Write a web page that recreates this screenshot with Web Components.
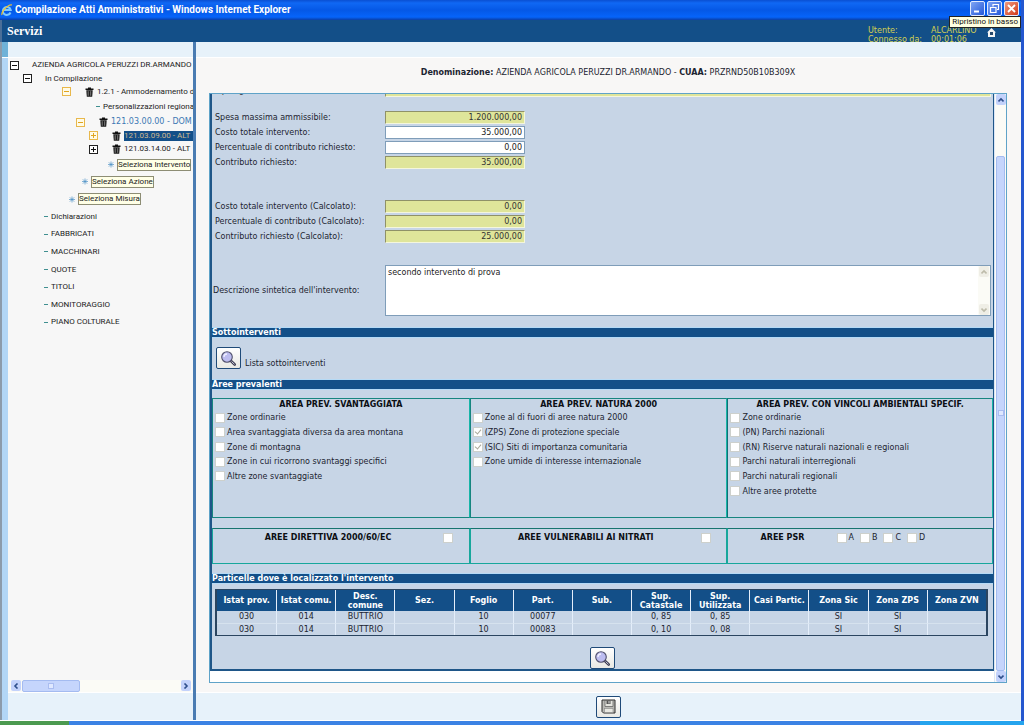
<!DOCTYPE html>
<html lang="it">
<head>
<meta charset="utf-8">
<title>Compilazione Atti Amministrativi</title>
<style>
html, body { margin: 0; height: 100%; }
body { font: 8px/12px "DejaVu Sans", Verdana, sans-serif; color: #1c2430; overflow: hidden; }
</style>
</head>
<body>
<app-window>
  <title-bar slot="title">Compilazione Atti Amministrativi - Windows Internet Explorer</title-bar>
  <service-header slot="header"></service-header>
  <nav-tree slot="nav"></nav-tree>
  <intervention-page slot="main"></intervention-page>
</app-window>

<script>
const define = (name, html, setup) => {
  const t = document.createElement('template');
  t.innerHTML = '<style>*{box-sizing:border-box}</style>' + html;
  customElements.define(name, class extends HTMLElement {
    constructor() {
      super();
      this.attachShadow({ mode: 'open' }).append(t.content.cloneNode(true));
    }
    connectedCallback() {
      if (setup && !this.ready) { this.ready = true; setup(this, this.shadowRoot); }
    }
  });
};

/* Icons */
const ICONS = {
  lens: '<svg viewBox="0 0 17 17" width="17" height="17"><path d="M10.5 10.5l4.2 4" stroke="#3c3c50" stroke-width="2.600" stroke-linecap="round"/><path d="M11.5 11.5l3 2.800" stroke="#c9c9dc" stroke-width="1"/><circle cx="7" cy="7" r="5.300" fill="#bdbdf0" stroke="#50506c" stroke-width="1.100"/><path d="M4 7a3 3 0 0 1 3-3" stroke="#f0f0ff" stroke-width="1.300" fill="none"/></svg>',
  disk: '<svg viewBox="0 0 15 15" width="15" height="15"><path d="M1 1h13v13H2.500L1 12.500z" fill="#b9b9b5" stroke="#2e2e2e"/><path d="M4 1.500h8v6H4z" fill="#e4e4de" stroke="#666" stroke-width=".8"/><path d="M5.500 1.500h4V5h-4z" fill="#555"/><path d="M7.500 2h1v2.500h-1z" fill="#ddd"/><rect x="3.500" y="9.500" width="8.500" height="4" fill="#e8e8e2" stroke="#888" stroke-width=".6"/></svg>',
  trash: '<svg viewBox="0 0 9 10" width="9" height="10"><path d="M.500 1.500h2.500V.500h3v1h2.500v1.500h-8z" fill="#111"/><path d="M1.300 3.200h6.400l-.5 6.500H1.800z" fill="#1b1b1b"/><path d="M3.200 4.200v4.600M5.700 4.200v4.600" stroke="#999" stroke-width=".8"/></svg>',
  star: '<svg viewBox="0 0 7 7" width="6" height="7"><path d="M3.500 0v7M0 3.500h7M1 1l5 5M6 1L1 6" stroke="#4b8fc4" stroke-width=".8"/></svg>',
  dash: '<svg viewBox="0 0 4 7" width="4" height="7"><path d="M0 3.500h4" stroke="#3f8f90" stroke-width="1"/></svg>'
};
define('ui-icon', '<style>:host{display:inline-flex;flex:none}</style>', (h, r) => {
  r.innerHTML += ICONS[h.getAttribute('name')];
});

define('icon-button', `<style>
:host{display:inline-block}
button{display:flex;align-items:center;justify-content:center;width:25px;height:22px;padding:0;border:1px solid #1f4a78;border-radius:2px;background:linear-gradient(#fff,#e9e9e4)}
</style><button type="button"><slot></slot></button>`, (h, r) => {
  r.querySelector('button').setAttribute('aria-label', h.getAttribute('label'));
});

/* Title bar with the window buttons */
define('title-bar', `<style>
:host{display:flex;align-items:center;height:20px;padding:0 2px 0 1px;background:linear-gradient(#0a4fd2,#1068f4 15%,#0558e6 50%,#0664fa 85%,#0a3fa8);color:#fff;font:bold 10px/18px "Roboto","Liberation Sans",sans-serif}
.t{flex:1;margin-left:2px;white-space:nowrap}
.b{display:flex;gap:2px;margin-bottom:3px}
button{display:flex;padding:0;width:15px;height:15px;border:1px solid #dfe9ff;border-radius:2px;background:linear-gradient(135deg,#7ea4f4,#2458d8)}
button.x{background:linear-gradient(135deg,#f09a80,#d03a18)}
</style>
<svg width="12" height="14" viewBox="0 0 12 14"><path d="M9.500 9.500A4 4 0 1 1 9.700 7H3" fill="none" stroke="#7cc8ff" stroke-width="2"/><path d="M1 12C0 9 7 1 11 2" fill="none" stroke="#e9c13a" stroke-width="1.200"/></svg>
<span class="t"><slot></slot></span>
<span class="b">
<button type="button" aria-label="Riduci a icona"><svg viewBox="0 0 13 13"><path d="M3 9.500h5" stroke="#fff" stroke-width="2"/></svg></button>
<button type="button" aria-label="Ripristina"><svg viewBox="0 0 13 13"><path d="M5 4.500V2.500h5.500v5H9M5 2.500h5.500M2.500 5.500h5.500v5H2.500z" fill="none" stroke="#fff" stroke-width="1.200"/></svg></button>
<button type="button" class="x" aria-label="Chiudi"><svg viewBox="0 0 13 13"><path d="M3 3l7 7M10 3l-7 7" stroke="#fff" stroke-width="1.800"/></svg></button>
</span>`);

define('service-header', `<style>
:host{display:flex;position:relative;height:22px;padding:0 25px 0 5px;align-items:center;background:#134f88;color:#fff}
h1{flex:1;margin:0;font:bold 12px/22px "Liberation Serif",serif}
dl{display:grid;grid-template-columns:63px 48px;margin:8px 0 0;color:#d4cf52;line-height:9px}
dd{margin:0}
a{display:flex;margin:2px 0 0 8px}
.tip{position:absolute;right:0;top:-4px;height:12px;padding:0 2px;border:1px solid #222;background:#ffffe1;color:#111;font:8px/10px Roboto,sans-serif;white-space:nowrap}
</style>
<h1>Servizi</h1>
<dl><dt>Utente:</dt><dd>ALCARLINO</dd><dt>Connesso da:</dt><dd>00:01:06</dd></dl>
<a href="#" aria-label="Home"><svg width="9" height="9" viewBox="0 0 9 9"><path d="M0 4.500L4.500 0 9 4.500H8V9H1V4.500z" fill="#f4f4f4"/><path d="M3 4h3v3H3z" fill="#27486a"/></svg></a>
<span class="tip" role="tooltip">Ripristino in basso</span>`);

/* Scroll bar drawn in the XP style; thumb start and size are percentages of the track */
define('scroll-bar', `<style>
:host{display:flex;flex:none;background:#fbfbf6;--c:#c3d2fb;--k:#2f4f8c}
:host([muted]){--c:#efeee6;--k:#bdbbaa}
:host([vertical]){flex-direction:column;width:12px}
:host(:not([vertical])){height:12px}
.a{flex:none;width:10px;height:11px;border-radius:2px;background:var(--c);display:flex;align-items:center;justify-content:center;margin:0 1px}
svg{width:6px;height:6px;fill:none;stroke:var(--k);stroke-width:1.600}
.track{flex:1;display:flex;min-width:0;min-height:0}
:host([vertical]) .track{flex-direction:column;margin:0 1px}
.before{flex:0 0 var(--start)}
.thumb{flex:0 0 var(--size);border:1px solid #a4bbf0;border-radius:2px;background:#c5d5fc;display:flex;align-items:center;justify-content:center}
.thumb::after{content:"";width:4px;height:4px;background:#dfe8ff;border:1px solid #aabdf0}
:host([muted]) .thumb{display:none}
</style>
<span class="a"><svg viewBox="0 0 6 6"><path class="p"/></svg></span>
<span class="track"><span class="before"></span><span class="thumb"></span></span>
<span class="a"><svg viewBox="0 0 6 6"><path class="n"/></svg></span>`, (h, r) => {
  const v = h.hasAttribute('vertical');
  r.querySelector('.p').setAttribute('d', v ? 'M.500 4.500L3 2l2.500 2.500' : 'M4.500.500L2 3l2.500 2.500');
  r.querySelector('.n').setAttribute('d', v ? 'M.500 1.500L3 4l2.500-2.500' : 'M1.500.500L4 3L1.500 5.500');
});

/* Window frame */
define('app-window', `<style>
:host{display:grid;grid-template-rows:auto auto minmax(0,1fr) 1px 4px;height:100vh;border-right:3px solid #2457cf;background:#fff}
.body{display:grid;grid-template-columns:8px 185px 3px minmax(0,1fr);min-height:0}
.edge{border-left:2px solid #8c9bab;background:linear-gradient(#6fb2d8 15px,#fff 15px,#fff 16px,#b2d6f6 16px)}
.bar{background:#4a7cb2}
slot{min-height:0}
.shell{border:solid #4a6f98;border-width:0 0 0 2px}
.task{margin-right:-3px;background:linear-gradient(90deg,#4c9a50 69px,#3b82e4 69px,#3b82e4 920px,#25a4ee 920px)}
</style>
<slot name="title"></slot>
<div class="shell"><slot name="header"></slot></div>
<div class="body"><span class="edge"></span><slot name="nav"></slot><span class="bar"></span><slot name="main"></slot></div>
<span></span><span class="task"></span>`);

/* One line of the navigation tree */
define('tree-row', `<style>
:host{display:flex;align-items:center;height:14px;padding-left:var(--indent);white-space:nowrap;font:8px/12px Roboto,"Liberation Sans",sans-serif}
:host([size=s]){height:13px}
:host([size=l]){height:17px}
:host([size=auto]){height:auto}
:host([wide]){font-family:"DejaVu Sans",sans-serif}
button{position:relative;flex:none;width:9px;height:9px;margin-right:13px;padding:0;border:1px solid #222;background:#fff;color:#111}
button.o,button.plus{margin-right:14px}
button.o{color:#e0a520;border-color:#e8b84c;background:#fffbe8}
button::before,button.plus::after{content:"";position:absolute;left:1px;right:1px;top:3px;height:1px;background:currentColor}
button.plus::after{left:3px;right:3px;top:1px;height:5px}
ui-icon{margin-right:3px}
a{color:#222;text-decoration:none}
:host([blue]) a{color:#3c78b4}
:host([selected]) a{flex:1;background:#134f88;color:#d0b98e;line-height:10px}
:host([boxed]) a{border:1px solid #8d8d74;background:#ffffe6;line-height:10px}
</style><a href="#"><slot></slot></a>`, (h, r) => {
  const a = r.querySelector('a');
  h.style.setProperty('--indent', h.getAttribute('indent') + 'px');
  const tg = h.getAttribute('toggle');
  if (tg) {
    const b = document.createElement('button');
    b.type = 'button'; b.className = tg;
    b.setAttribute('aria-label', tg.includes('plus') ? 'Espandi' : 'Comprimi');
    a.before(b);
  }
  const ic = h.getAttribute('icon');
  if (ic) { const i = document.createElement('ui-icon'); i.setAttribute('name', ic); a.before(i); }
});

define('nav-tree', `<style>
:host{display:flex;flex-direction:column;min-height:0;background:#e7f2fa}
nav{flex:1;display:flex;flex-direction:column;min-height:0;margin-top:15px;border:solid #fff;border-width:1px 0;background:#f7f7f7;overflow:hidden}
.leaves{display:grid;grid-auto-rows:1fr;height:158px}
scroll-bar{margin:auto 1px 0 2px;--start:0%;--size:37%}
footer{height:27px}
</style>
<nav aria-label="Servizi">
<tree-row indent="2" toggle="minus">AZIENDA AGRICOLA PERUZZI DR.ARMANDO</tree-row>
<tree-row indent="15" size="s" toggle="minus">In Compilazione</tree-row>
<tree-row indent="54" size="s" toggle="minus o" icon="trash">1.2.1 - Ammodernamento d</tree-row>
<tree-row indent="88" size="l" icon="dash">Personalizzazioni regiona</tree-row>
<tree-row indent="68" toggle="minus o" icon="trash" wide blue>121.03.00.00 - DOM</tree-row>
<tree-row indent="81" size="s" toggle="plus o" icon="trash" selected>121.03.09.00 - ALT</tree-row>
<tree-row indent="81" toggle="plus" icon="trash">121.03.14.00 - ALT</tree-row>
<tree-row indent="100" size="l" icon="star" boxed>Seleziona Intervento</tree-row>
<div class="leaves">
<tree-row indent="74" size="auto" icon="star" boxed>Seleziona Azione</tree-row>
<tree-row indent="61" size="auto" icon="star" boxed>Seleziona Misura</tree-row>
<tree-row indent="36" size="auto" icon="dash">Dichiarazioni</tree-row>
<tree-row indent="36" size="auto" icon="dash">FABBRICATI</tree-row>
<tree-row indent="36" size="auto" icon="dash">MACCHINARI</tree-row>
<tree-row indent="36" size="auto" icon="dash">QUOTE</tree-row>
<tree-row indent="36" size="auto" icon="dash">TITOLI</tree-row>
<tree-row indent="36" size="auto" icon="dash">MONITORAGGIO</tree-row>
<tree-row indent="36" size="auto" icon="dash">PIANO COLTURALE</tree-row>
</div>
<scroll-bar></scroll-bar>
</nav>
<footer></footer>`);

/* Form pieces */
define('form-field', `<style>
:host{display:grid;grid-template-columns:170px 140px;align-items:center;height:15px;padding-left:3px}
:host([full]){grid-template-columns:170px minmax(0,1fr);padding-right:2px}
input{width:100%;height:13px;margin:0;padding:0 2px;border:1px solid #7f9db9;border-radius:0;background:#fff;color:#222;font:inherit;text-align:right;outline:0}
input:read-only{background:#dfe59a;border-color:#8f9168 #f4f6dc #f4f6dc #8f9168;color:#333}
:host([full]) input{text-align:left}
</style><label for="f"></label><input id="f">`, (h, r) => {
  r.querySelector('label').textContent = h.getAttribute('label');
  const i = r.querySelector('input');
  i.value = h.getAttribute('value');
  i.readOnly = h.hasAttribute('readonly');
});

define('text-block', `<style>
:host{display:grid;grid-template-columns:172px minmax(0,1fr) 13px;align-items:center;padding:0 2px 0 1px}
textarea{display:block;width:100%;height:51px;margin:0;padding:1px 2px;border:1px solid #7f9db9;border-right:0;border-radius:0;resize:none;overflow:hidden;background:#fff;color:#222;font:inherit;outline:0}
scroll-bar{height:51px;border:1px solid #7f9db9;border-left:0;width:13px}
</style><label for="t">Descrizione sintetica dell'intervento:</label><textarea id="t">secondo intervento di prova</textarea><scroll-bar vertical muted></scroll-bar>`);

define('section-bar', `<style>
:host{display:block}
h2{margin:0;border:solid #b5daf6;border-width:1px 0;background:#134f88;color:#fff;font:bold 8px/9px "DejaVu Sans",sans-serif}
</style><h2><slot></slot></h2>`);

define('check-item', `<style>
:host{display:block}
label{display:flex;align-items:center;gap:2px;height:100%}
input{appearance:none;position:relative;flex:none;width:10px;height:10px;margin:0 0 1px;border:1px solid #cdd0cc;background:#fff}
input:checked::before{content:"";position:absolute;left:2px;top:0;width:3px;height:5px;border:solid #aaa89a;border-width:0 1px 1px 0;transform:rotate(40deg)}
</style><label><input type="checkbox" disabled><slot></slot></label>`, (h, r) => {
  const i = r.querySelector('input');
  i.checked = h.hasAttribute('checked');
  if (h.getAttribute('label')) i.setAttribute('aria-label', h.getAttribute('label'));
});

define('area-box', `<style>
:host{display:block;min-width:0;border:1px solid #17857f;border-right-color:#17b5a8}
:host([last]){border-left-color:#0f6f74}
h3{margin:0;color:#0c0f14;font:bold 8px/12px "DejaVu Sans",sans-serif;text-align:center}
.list{display:grid;grid-template-rows:repeat(6,1fr);height:88px;padding-left:2px}
</style><h3></h3><div class="list"><slot></slot></div>`, (h, r) => {
  r.querySelector('h3').textContent = h.getAttribute('heading');
});

define('flag-box', `<style>
:host{display:grid;grid-template-columns:90% 1fr;align-items:center;align-content:start;padding-top:3px;border:1px solid #17a79c;border-top-color:#17756f}
:host([many]){grid-template-columns:41% 1fr}
h3{margin:0;color:#0c0f14;font:bold 8px/12px "DejaVu Sans",sans-serif;text-align:center}
.f{display:flex;gap:6px;height:12px}
</style><h3></h3><div class="f"><slot></slot></div>`, (h, r) => {
  r.querySelector('h3').textContent = h.getAttribute('heading');
});

define('parcel-table', `<style>
:host{display:block}
table{width:100%;table-layout:fixed;border-collapse:separate;border-spacing:0;border:solid #2b4560;border-width:1px 2px}
th{height:21px;padding:0;background:#134f88;color:#fff;font:bold 8px/9px "DejaVu Sans",sans-serif}
td{height:12px;padding:0;text-align:center;line-height:10px}
th+th,td+td{border-left:1px solid #e4eefa}
tbody tr+tr td{border-top:1px solid #d6e2ee}
</style><table><thead><tr></tr></thead><tbody></tbody></table>`, (h, r) => {
  const heads = ['Istat prov.', 'Istat comu.', 'Desc. comune', 'Sez.', 'Foglio', 'Part.', 'Sub.', 'Sup. Catastale', 'Sup. Utilizzata', 'Casi Partic.', 'Zona Sic', 'Zona ZPS', 'Zona ZVN'];
  const rows = [
    ['030', '014', 'BUTTRIO', '', '10', '00077', '', '0, 85', '0, 85', '', 'SI', 'SI', ''],
    ['030', '014', 'BUTTRIO', '', '10', '00083', '', '0, 10', '0, 08', '', 'SI', 'SI', '']
  ];
  r.querySelector('thead tr').innerHTML = heads.map(t => '<th scope="col">' + t + '</th>').join('');
  r.querySelector('tbody').innerHTML = rows.map(c => '<tr>' + c.map(t => '<td>' + t + '</td>').join('') + '</tr>').join('');
});

define('intervention-page', `<style>
:host{display:flex;flex-direction:column;min-height:0;background:#e7f2fa}
main{flex:1;display:flex;flex-direction:column;min-height:0;margin-top:15px;padding:0 14px 9px 13px;border:solid #fff;border-width:1px 0;background:#f8f7f6}
.who{margin:0;height:35px;padding-top:9px;text-align:center}
.frame{flex:1;display:flex;min-height:0;border:1px solid #5fa3c8;background:#fff}
/* the form is scrolled to its end, so it hangs from the bottom edge */
.view{flex:1;display:flex;flex-direction:column;justify-content:flex-end;min-width:0;overflow:hidden;padding-bottom:11px}
form{flex:none;border:solid #1f5688;border-width:0 1px 2px 2px;background:#c7d5e6}
.g1{padding-top:12px}.g2{padding:29px 0 21px}
text-block{margin-bottom:11px}
.sub{display:flex;align-items:flex-end;gap:4px;height:41px;padding:0 4px 10px}
.sub span{line-height:11px}
.areas,.flags{display:grid;grid-template-columns:33fr 33fr 34fr}
.areas{height:120px;margin:8px 0 10px}
.flags{height:36px;margin-bottom:9px}
parcel-table{margin:5px 5px 11px 3px}
.look{display:flex;justify-content:center}
scroll-bar{--start:9%;--size:91%;border-left:1px solid #dbe6f6;}
footer{display:flex;justify-content:center;align-items:center;height:27px}
</style>
<main>
<p class="who"><b>Denominazione:</b> AZIENDA AGRICOLA PERUZZI DR.ARMANDO - <b>CUAA:</b> PRZRND50B10B309X</p>
<div class="frame">
<div class="view"><form>
<form-field full readonly label="Tipologia Q.S.N. :" value="AMMODERNAMENTO DOTAZIONI AZIENDALI"></form-field>
<div class="g1">
<form-field readonly label="Spesa massima ammissibile:" value="1.200.000,00"></form-field>
<form-field label="Costo totale intervento:" value="35.000,00"></form-field>
<form-field label="Percentuale di contributo richiesto:" value="0,00"></form-field>
<form-field readonly label="Contributo richiesto:" value="35.000,00"></form-field>
</div>
<div class="g2">
<form-field readonly label="Costo totale intervento (Calcolato):" value="0,00"></form-field>
<form-field readonly label="Percentuale di contributo (Calcolato):" value="0,00"></form-field>
<form-field readonly label="Contributo richiesto (Calcolato):" value="25.000,00"></form-field>
</div>
<text-block></text-block>
<section-bar>Sottointerventi</section-bar>
<div class="sub"><icon-button label="Lista sottointerventi"><ui-icon name="lens"></ui-icon></icon-button><span>Lista sottointerventi</span></div>
<section-bar>Aree prevalenti</section-bar>
<div class="areas">
<area-box heading="AREA PREV. SVANTAGGIATA">
<check-item>Zone ordinarie</check-item><check-item>Area svantaggiata diversa da area montana</check-item><check-item>Zone di montagna</check-item><check-item>Zone in cui ricorrono svantaggi specifici</check-item><check-item>Altre zone svantaggiate</check-item>
</area-box>
<area-box heading="AREA PREV. NATURA 2000">
<check-item>Zone al di fuori di aree natura 2000</check-item><check-item checked>(ZPS) Zone di protezione speciale</check-item><check-item checked>(SIC) Siti di importanza comunitaria</check-item><check-item>Zone umide di interesse internazionale</check-item>
</area-box>
<area-box last heading="AREA PREV. CON VINCOLI AMBIENTALI SPECIF.">
<check-item>Zone ordinarie</check-item><check-item>(PN) Parchi nazionali</check-item><check-item>(RN) Riserve naturali nazionali e regionali</check-item><check-item>Parchi naturali interregionali</check-item><check-item>Parchi naturali regionali</check-item><check-item>Altre aree protette</check-item>
</area-box>
</div>
<div class="flags">
<flag-box heading="AREE DIRETTIVA 2000/60/EC"><check-item label="Aree direttiva 2000/60/EC"></check-item></flag-box>
<flag-box heading="AREE VULNERABILI AI NITRATI"><check-item label="Aree vulnerabili ai nitrati"></check-item></flag-box>
<flag-box many heading="AREE PSR"><check-item>A</check-item><check-item>B</check-item><check-item>C</check-item><check-item>D</check-item></flag-box>
</div>
<section-bar>Particelle dove è localizzato l'intervento</section-bar>
<parcel-table></parcel-table>
<div class="look"><icon-button label="Cerca particelle"><ui-icon name="lens"></ui-icon></icon-button></div>
</form></div>
<scroll-bar vertical></scroll-bar>
</div>
</main>
<footer><icon-button label="Salva"><ui-icon name="disk"></ui-icon></icon-button></footer>`);
</script>
</body>
</html>
